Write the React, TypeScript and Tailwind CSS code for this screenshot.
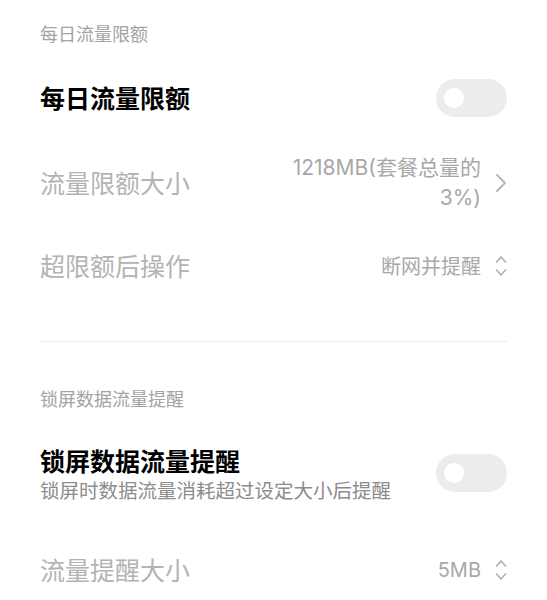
import React from "react";

const font = { fontFamily: '"Noto Sans CJK SC", "Noto Sans", sans-serif' };
const valueFont = { fontFamily: 'Inter, "Noto Sans CJK SC", sans-serif' };

function Toggle() {
  return (
    <div className="flex h-[38px] w-[71px] shrink-0 items-center rounded-full bg-[#ececec] pl-[8px]">
      <span className="h-[20px] w-[20px] rounded-full bg-white" />
    </div>
  );
}

function ChevronRight() {
  return (
    <svg width="12" height="20" viewBox="0 0 12 20" fill="none" className="shrink-0">
      <path d="M2 2l8 8-8 8" stroke="#b4b4b4" strokeWidth="1.8" strokeLinecap="round" strokeLinejoin="round" />
    </svg>
  );
}

function ChevronUpDown() {
  return (
    <svg width="12" height="24" viewBox="0 0 12 24" fill="none" className="shrink-0">
      <path d="M1.5 8L6 3l4.5 5" stroke="#b4b4b4" strokeWidth="1.8" strokeLinecap="round" strokeLinejoin="round" />
      <path d="M1.5 16L6 21l4.5-5" stroke="#b4b4b4" strokeWidth="1.8" strokeLinecap="round" strokeLinejoin="round" />
    </svg>
  );
}

function SectionHeader({ children, className = "" }: { children: React.ReactNode; className?: string }) {
  return (
    <div className={`flex h-[56px] items-center text-[18px] text-[#a3a3a3] ${className}`}>{children}</div>
  );
}

export default function App() {
  return (
    <div className="min-h-screen bg-white px-[40px]" style={font}>
      <SectionHeader className="h-[66px]">每日流量限额</SectionHeader>

      <div className="flex h-[64px] items-center justify-between">
        <span className="text-[25px] font-semibold text-black">每日流量限额</span>
        <Toggle />
      </div>

      <div className="flex h-[106px] items-center justify-between">
        <span className="text-[25px] text-[#b3b3b3]">流量限额大小</span>
        <div className="flex items-center gap-[14px]">
          <span className="w-[205px] text-right text-[21px] leading-[30px] text-[#a8a8a8]" style={valueFont}>
            1218MB(套餐总量的3%)
          </span>
          <ChevronRight />
        </div>
      </div>

      <div className="flex h-[60px] items-center justify-between">
        <span className="text-[25px] text-[#b3b3b3]">超限额后操作</span>
        <div className="flex items-center gap-[14px]">
          <span className="text-[20px] text-[#a8a8a8]">断网并提醒</span>
          <ChevronUpDown />
        </div>
      </div>

      <div className="mt-[45px] h-px bg-[#ececec]" />

      <SectionHeader className="mt-[28px]">锁屏数据流量提醒</SectionHeader>

      <div className="flex h-[94px] items-center justify-between">
        <div className="flex flex-col">
          <span className="text-[25px] font-semibold leading-[34px] text-black">锁屏数据流量提醒</span>
          <span className="text-[19.5px] leading-[26px] text-[#8c8c8c]">锁屏时数据流量消耗超过设定大小后提醒</span>
        </div>
        <Toggle />
      </div>

      <div className="flex h-[100px] items-center justify-between">
        <span className="text-[25px] text-[#b3b3b3]">流量提醒大小</span>
        <div className="flex items-center gap-[14px]">
          <span className="text-[20px] text-[#a8a8a8]" style={valueFont}>5MB</span>
          <ChevronUpDown />
        </div>
      </div>
    </div>
  );
}
